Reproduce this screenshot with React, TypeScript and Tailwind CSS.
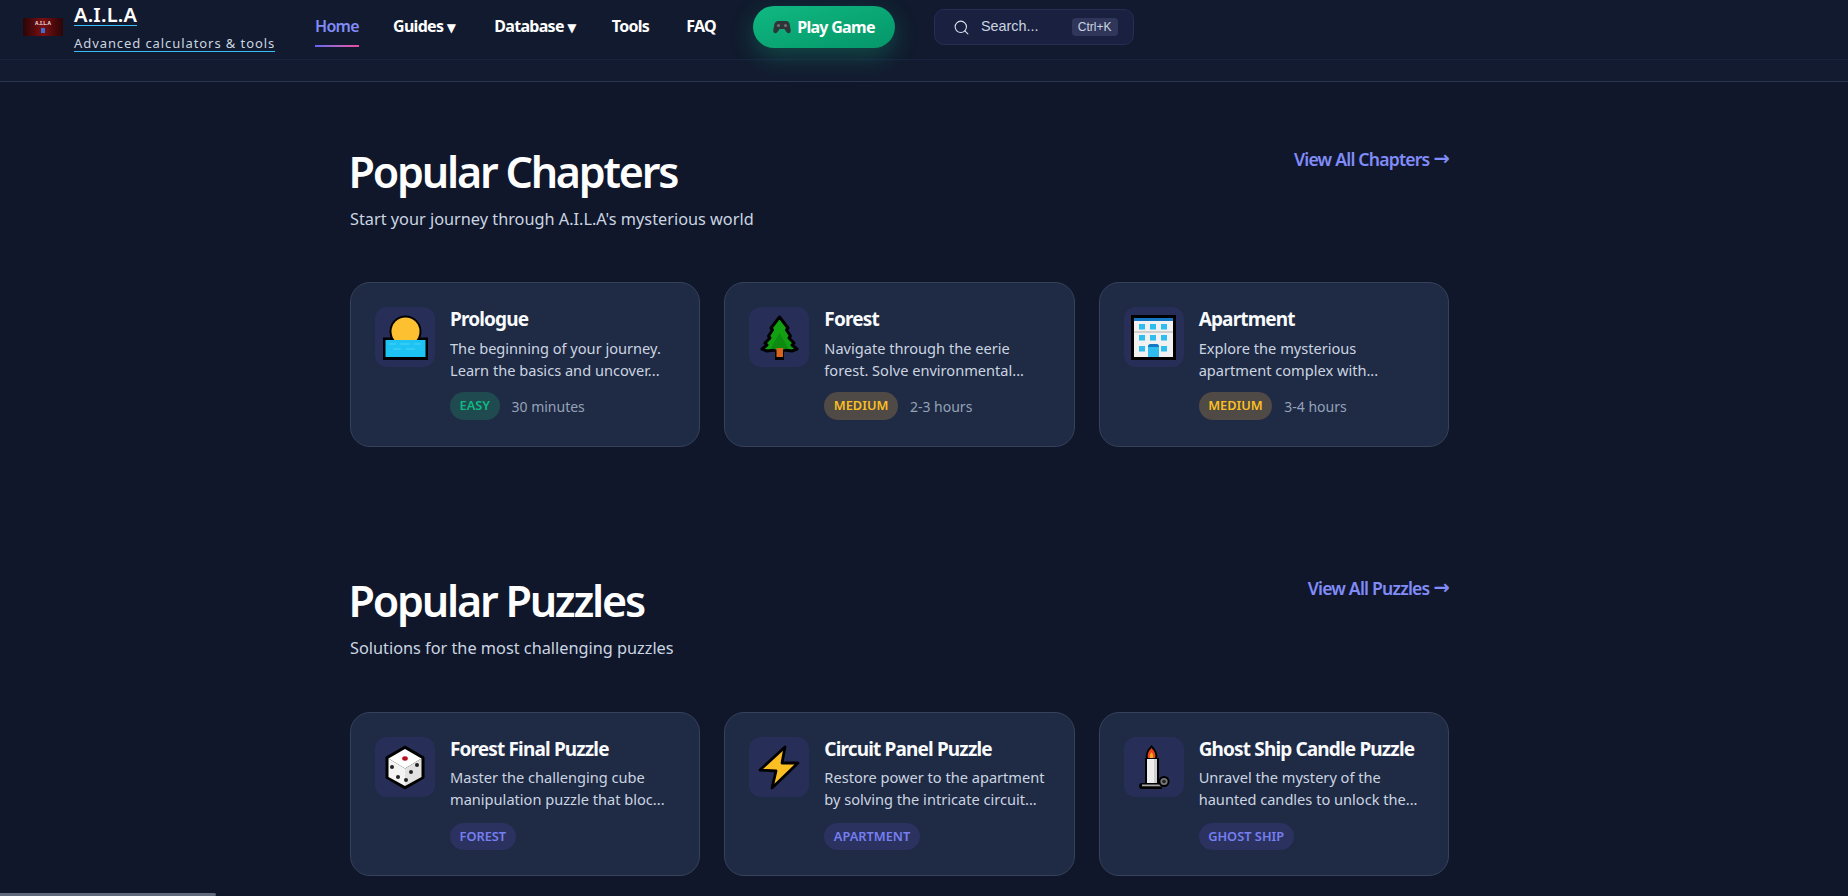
import { Search } from "lucide-react";
import type { ReactNode } from "react";

const Sunrise = () => (
  <svg width="45" height="45" viewBox="0 0 45 45">
    <circle cx="22.5" cy="16.5" r="16" fill="#000" />
    <rect x="0" y="22.5" width="45" height="22.5" fill="#000" />
    <circle cx="22.5" cy="16.5" r="14" fill="#fcc030" />
    <rect x="2.5" y="25" width="40" height="17" fill="#1cc3f3" />
    <path d="M6 29h7M17 29h10M31 29h7M10 34h8M23 34h9" stroke="#4fd2f6" strokeWidth="1" />
  </svg>
);

const Tree = () => (
  <svg width="45" height="45" viewBox="0 0 45 45">
    <rect x="18" y="32" width="9" height="13" fill="#000" />
    <path
      d="M22.5 2 L31 13 L29.5 15 L33.5 21 L32 23 L37 28 L35 30 L40 34 L35 36 L27 35 L22.5 38 L18 35 L10 36 L5 34 L10 30 L8 28 L13 23 L11.5 21 L15.5 15 L14 13 Z"
      fill="#12a012"
      stroke="#000"
      strokeWidth="3"
      strokeLinejoin="round"
    />
    <path d="M22.5 18 L31 33 L22.5 36 L14 33 Z" fill="#0d8a10" />
    <rect x="19.5" y="33" width="6.5" height="9" fill="#d9641e" />
  </svg>
);

const Building = () => (
  <svg width="45" height="45" viewBox="0 0 45 45">
    <rect width="45" height="45" fill="#000" />
    <rect x="3" y="3" width="39" height="39" fill="#f1f1f1" />
    <rect x="3" y="3" width="39" height="3" fill="#1377c4" />
    <rect x="3" y="16" width="39" height="2" fill="#cfcfcf" />
    {[
      [8, 9],
      [19, 9],
      [30, 9],
      [8, 20],
      [19, 20],
      [30, 20],
      [8, 31],
      [30, 31],
    ].map(([x, y]) => (
      <rect key={`${x}-${y}`} x={x} y={y} width="6" height="5.5" fill="#2fbdf0" />
    ))}
    <path d="M17 42V32q0-3 3-3h5q3 0 3 3v10z" fill="#2fbdf0" />
    <path d="M17 32q0-3 3-3h5q3 0 3 3z" fill="#1377c4" />
  </svg>
);

const Dice = () => (
  <svg width="45" height="45" viewBox="0 0 45 45">
    <path d="M22 1 L41 12 L41 33 L22 44 L3 33 L3 12 Z" fill="#000" stroke="#000" strokeWidth="1" strokeLinejoin="round" />
    <path d="M22 4 L38.5 13.5 L22 23.5 L5.5 13.5 Z" fill="#fff" />
    <path d="M5.5 13.5 L22 23.5 L22 41 L5.5 32 Z" fill="#f4f4f4" />
    <path d="M38.5 13.5 L22 23.5 L22 41 L38.5 32 Z" fill="#e2e2e2" />
    <ellipse cx="22" cy="13.5" rx="2.8" ry="2.2" fill="#b5101c" />
    <circle cx="9" cy="22" r="2" fill="#222" />
    <circle cx="15" cy="32" r="2" fill="#222" />
    <circle cx="34" cy="20" r="2" fill="#222" />
    <circle cx="28" cy="27" r="2" fill="#222" />
    <circle cx="23" cy="35" r="2" fill="#222" />
  </svg>
);

const Bolt = () => (
  <svg width="45" height="45" viewBox="0 0 45 45">
    <path
      d="M28 2 L3 25 L19 26 L15 43 L41 18 L25 18 Z"
      fill="#fbbf24"
      stroke="#000"
      strokeWidth="2.8"
      strokeLinejoin="round"
    />
  </svg>
);

const Candle = () => (
  <svg width="45" height="45" viewBox="0 0 45 45">
    <path d="M8 41q0-3 3-3h20v6H11q-3 0-3-3z" fill="#000" />
    <rect x="14" y="13" width="14" height="26" fill="#000" />
    <rect x="16" y="14" width="10" height="24" fill="#ededed" />
    <rect x="23" y="14" width="3" height="24" fill="#cfcfcf" />
    <path d="M20.5 0 Q27.5 7 26 14 L15 14 Q13.5 7 20.5 0z" fill="#000" />
    <path d="M20.5 3 Q25.5 8 24 13 L17 13 Q15.5 8 20.5 3z" fill="#e8461c" />
    <path d="M20.5 7 Q23 10 22 13 L19 13 Q18 10 20.5 7z" fill="#f9a825" />
    <rect x="11" y="39.5" width="20" height="1.8" fill="#a5a5a5" />
    <circle cx="33" cy="36.5" r="5.5" fill="#000" />
    <circle cx="33" cy="36.5" r="3.6" fill="#777" />
    <circle cx="33" cy="36.5" r="1.8" fill="#222" />
  </svg>
);

const Pad = () => (
  <svg width="18" height="16" viewBox="0 0 18 16">
    <path
      d="M4.5 2h9q2.4 0 3 2.5l1.2 6.5q.4 3-1.8 3.3-1.5.2-3-2L11.5 10h-5l-1.4 2.3q-1.5 2.2-3 2-2.2-.3-1.8-3.3l1.2-6.5Q3.1 2 4.5 2z"
      fill="#2f3438"
    />
    <circle cx="5.5" cy="6.5" r="1.6" fill="#6b7076" />
    <circle cx="12.5" cy="6.5" r="1.6" fill="#6b7076" />
  </svg>
);

const Logo = () => (
  <div className="w-[40px] h-[18px] bg-gradient-to-r from-[#2a0507] via-[#7d0f12] to-[#2a0507] flex flex-col items-center overflow-hidden">
    <span className="text-[5px] leading-[10px] font-bold text-[#eadcdc]">A.I.L.A</span>
    <span className="w-[4px] h-[5px] bg-[#3b6fd1]"></span>
  </div>
);

type CardProps = {
  icon: ReactNode;
  title: string;
  lines: [string, string];
  badge: string;
  badgeClass: string;
  time?: string;
  tall?: boolean;
};

const Card = ({ icon, title, lines, badge, badgeClass, time, tall }: CardProps) => {
  return (
    <div className={`flex gap-[15px] p-6 bg-[#1f2a44] border border-[#36415a] rounded-[20px] ${tall ? "h-[165px]" : "h-[164px]"}`}>
      <div className="w-[60px] h-[60px] shrink-0 rounded-xl bg-[#272f59] flex items-center justify-center">
        {icon}
      </div>
      <div className="min-w-0">
        <h3 className="-mt-[1px] text-[19px] leading-[26px] font-bold tracking-[-0.85px] text-[#f8fafc]">{title}</h3>
        <p className={`${tall ? "mt-[5px]" : "mt-[4px]"} text-[14.6px] leading-[22px] text-[#cbd5e1] whitespace-nowrap`}>
          {lines[0]}
          <br />
          {lines[1]}
        </p>
        <div className={`flex items-center gap-[12px] ${tall ? "mt-[11px]" : "mt-[13px]"}`}>
          <span className={`${tall ? "h-[28px]" : "h-[27px]"} px-[9.5px] rounded-[14px] text-[12.8px] font-semibold flex items-center ${badgeClass}`}>
            {badge}
          </span>
          {time && <span className="text-[14px] text-[#94a3b8]">{time}</span>}
        </div>
      </div>
    </div>
  );
};

const Section = ({ title, sub, link, gridGap, children }: { title: string; sub: string; link: string; gridGap: string; children: ReactNode }) => {
  return (
    <section className="w-[1099px] ml-[350px]">
      <div className="flex justify-between items-start h-[91px]">
        <div>
          <h2 className="-ml-[1.5px] text-[43px] leading-[54px] font-semibold tracking-[-2.2px] text-white">{title}</h2>
          <p className="mt-[6px] text-[16.3px] leading-[28px] text-[#cbd5e1]">{sub}</p>
        </div>
        <a className="mt-[2px] flex items-center gap-[4px] text-[17.6px] leading-[24px] font-semibold tracking-[-0.8px] text-[#818cf8]">
          {link}
          <span className="text-[19.5px] font-bold font-['DejaVu_Sans',sans-serif]">→</span>
        </a>
      </div>
      <div className={`grid grid-cols-3 gap-6 ${gridGap}`}>{children}</div>
    </section>
  );
};

const chapterBadge = {
  easy: "bg-[#1f4a50] text-[#10b981]",
  medium: "bg-[#4f4a45] text-[#fbbf24]",
};
const areaBadge = "bg-[#2b3260] text-[#767ff0]";
const arrow = "text-[12px] font-['DejaVu_Sans',sans-serif]";

export default function App() {
  return (
    <div className="h-[896px] overflow-hidden bg-[#10172b] font-['Noto_Sans','Open_Sans',sans-serif] relative">
      <header className="h-[60px] bg-[#111a2e] border-b border-[#18233d] flex items-start relative">
        <div className="flex items-start w-[315px] pl-[23px]">
          <div className="mt-[18px]">
            <Logo />
          </div>
          <div className="ml-[11px] mt-[4px] flex flex-col items-start">
            <span className="text-[20px] leading-[21px] font-semibold tracking-[0.2px] text-white border-b border-[#38bdf8]">A.I.L.A</span>
            <span className="mt-[10px] text-[13px] leading-[15px] tracking-[0.92px] text-[#cbd5e1] border-b border-[#38bdf8]">
              Advanced calculators &amp; tools
            </span>
          </div>
        </div>
        <nav className="flex items-start h-[59px] text-[16px] font-bold tracking-[-0.7px] text-white">
          <a className="mt-[14px] w-[44px] flex flex-col text-[#818cf8] font-semibold">
            <span className="leading-[24px]">Home</span>
            <span className="mt-[7px] h-[2px] w-full bg-gradient-to-r from-[#6366f1] to-[#ec4899]"></span>
          </a>
          <a className="mt-[14px] ml-[34px] leading-[24px]">Guides <span className={arrow}>▼</span></a>
          <a className="mt-[14px] ml-[39px] leading-[24px]">Database <span className={arrow}>▼</span></a>
          <a className="mt-[14px] ml-[36px] leading-[24px]">Tools</a>
          <a className="mt-[14px] ml-[37px] leading-[24px]">FAQ</a>
          <a className="mt-[6px] ml-[37px] w-[142px] h-[42px] pb-[1px] rounded-[21px] bg-gradient-to-br from-[#10b981] to-[#059669] flex items-center justify-center gap-[6px] shadow-[0_8px_24px_rgba(16,185,129,0.3)]">
            <Pad />
            <span>Play Game</span>
          </a>
        </nav>
        <div className="ml-[39px] mt-[9px] w-[200px] h-[36px] rounded-[10px] bg-[#1a2040] border border-[#272d55] flex items-center pl-[18px] font-['Liberation_Sans',sans-serif]">
          <Search size={17} strokeWidth={1.5} className="text-[#dbe3ee]" />
          <span className="ml-[11px] text-[14.4px] text-[#cbd5e1]">Search...</span>
          <kbd className="ml-[33px] w-[46px] h-[18px] rounded-[4px] bg-[#30365a] text-[12px] leading-[18px] text-center text-[#cbd5e1] font-['Liberation_Sans',sans-serif]">
            Ctrl+K
          </kbd>
        </div>
      </header>
      <div className="h-[22px] bg-[#131b30] border-b border-[#2c3550]"></div>

      <main className="pt-[63px]">
        <Section title="Popular Chapters" sub="Start your journey through A.I.L.A's mysterious world" link="View All Chapters" gridGap="mt-[46px]">
          <Card icon={<Sunrise />} title="Prologue" lines={["The beginning of your journey.", "Learn the basics and uncover..."]} badge="EASY" badgeClass={chapterBadge.easy} time="30 minutes" tall />
          <Card icon={<Tree />} title="Forest" lines={["Navigate through the eerie", "forest. Solve environmental..."]} badge="MEDIUM" badgeClass={chapterBadge.medium} time="2-3 hours" tall />
          <Card icon={<Building />} title="Apartment" lines={["Explore the mysterious", "apartment complex with..."]} badge="MEDIUM" badgeClass={chapterBadge.medium} time="3-4 hours" tall />
        </Section>
        <div className="h-[127px]"></div>
        <Section title="Popular Puzzles" sub="Solutions for the most challenging puzzles" link="View All Puzzles" gridGap="mt-[47px]">
          <Card icon={<Dice />} title="Forest Final Puzzle" lines={["Master the challenging cube", "manipulation puzzle that bloc..."]} badge="FOREST" badgeClass={areaBadge} />
          <Card icon={<Bolt />} title="Circuit Panel Puzzle" lines={["Restore power to the apartment", "by solving the intricate circuit..."]} badge="APARTMENT" badgeClass={areaBadge} />
          <Card icon={<Candle />} title="Ghost Ship Candle Puzzle" lines={["Unravel the mystery of the", "haunted candles to unlock the..."]} badge="GHOST SHIP" badgeClass={areaBadge} />
        </Section>
      </main>

      {/* scrollbar thumb */}
      <div className="absolute left-0 bottom-0 w-[216px] h-[3px] bg-[#5f697c] rounded-r-sm"></div>
    </div>
  );
}
